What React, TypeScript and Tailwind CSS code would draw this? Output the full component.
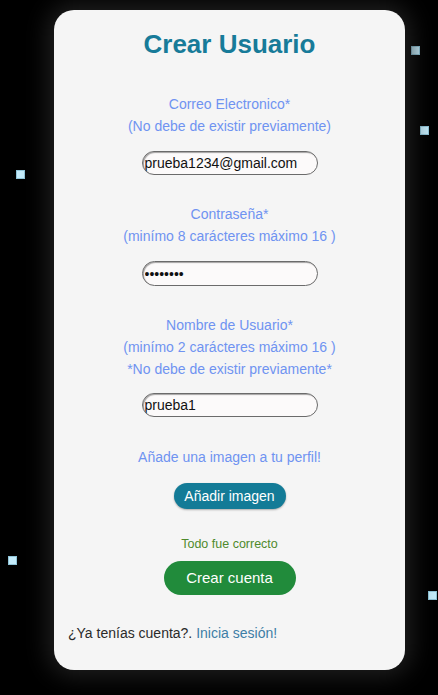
import React from "react";

const Sq = ({ cls }: { cls: string }) => (
  <div className={`absolute w-[9px] h-[9px] bg-[#c4ecfb] border border-[#8fc4d8] ${cls}`} />
);

export default function App() {
  const label = "text-[14px] leading-[22px] text-[#6f93f1] text-center";
  const input =
    "w-[176px] rounded-full border border-[#6b6b6b] bg-[#fcfafa] px-[2px] text-[14px] text-[#111] outline-none shadow-[inset_1px_1px_1px_rgba(0,0,0,0.35)]";
  return (
    <div
      className="relative w-[438px] h-[695px] bg-black overflow-hidden"
      style={{ fontFamily: '"Liberation Sans", Arial, sans-serif' }}
    >
      <Sq cls="left-[16px] top-[170px]" />
      <Sq cls="left-[411px] top-[46px]" />
      <Sq cls="left-[420px] top-[126px]" />
      <Sq cls="left-[8px] top-[556px]" />
      <Sq cls="left-[428px] top-[591px]" />
      <div className="absolute left-[54px] top-[10px] w-[351px] h-[660px] rounded-[20px] bg-[#f5f5f5] shadow-[0_0_24px_6px_rgba(40,40,40,0.8)] flex flex-col items-center">
        <h1 className="mt-[19px] text-[26px] leading-[30px] font-bold text-[#177b99]">Crear Usuario</h1>
        <div className={`${label} mt-[34px]`}>
          <div>Correo Electronico*</div>
          <div>(No debe de existir previamente)</div>
        </div>
        <input className={`${input} mt-[14px] h-[24px]`} defaultValue="prueba1234@gmail.com" />
        <div className={`${label} mt-[28px]`}>
          <div>Contraseña*</div>
          <div>(minímo 8 carácteres máximo 16 )</div>
        </div>
        <input type="password" className={`${input} mt-[14px] h-[25px]`} defaultValue="12345678" />
        <div className={`${label} mt-[28px]`}>
          <div>Nombre de Usuario*</div>
          <div>(minímo 2 carácteres máximo 16 )</div>
          <div>*No debe de existir previamente*</div>
        </div>
        <input className={`${input} mt-[13px] h-[24px]`} defaultValue="prueba1" />
        <div className={`${label} mt-[29px]`}>Añade una imagen a tu perfil!</div>
        <button className="mt-[15px] w-[112px] h-[26px] rounded-full bg-[#137b97] text-white text-[14px] leading-[26px] shadow-[0_1px_2px_rgba(0,0,0,0.3)]">
          Añadir imagen
        </button>
        <div className="mt-[27px] text-[12.5px] leading-[16px] text-[#4f8a2c]">Todo fue correcto</div>
        <button className="mt-[9px] w-[132px] h-[34px] rounded-full bg-[#218b3b] text-white text-[15px] leading-[34px]">
          Crear cuenta
        </button>
        <div className="self-start ml-[14px] mt-[29px] text-[14px] leading-[18px] text-[#2a2a2a]">
          ¿Ya tenías cuenta?. <span className="text-[#3d7ea6]">Inicia sesión!</span>
        </div>
      </div>
    </div>
  );
}
